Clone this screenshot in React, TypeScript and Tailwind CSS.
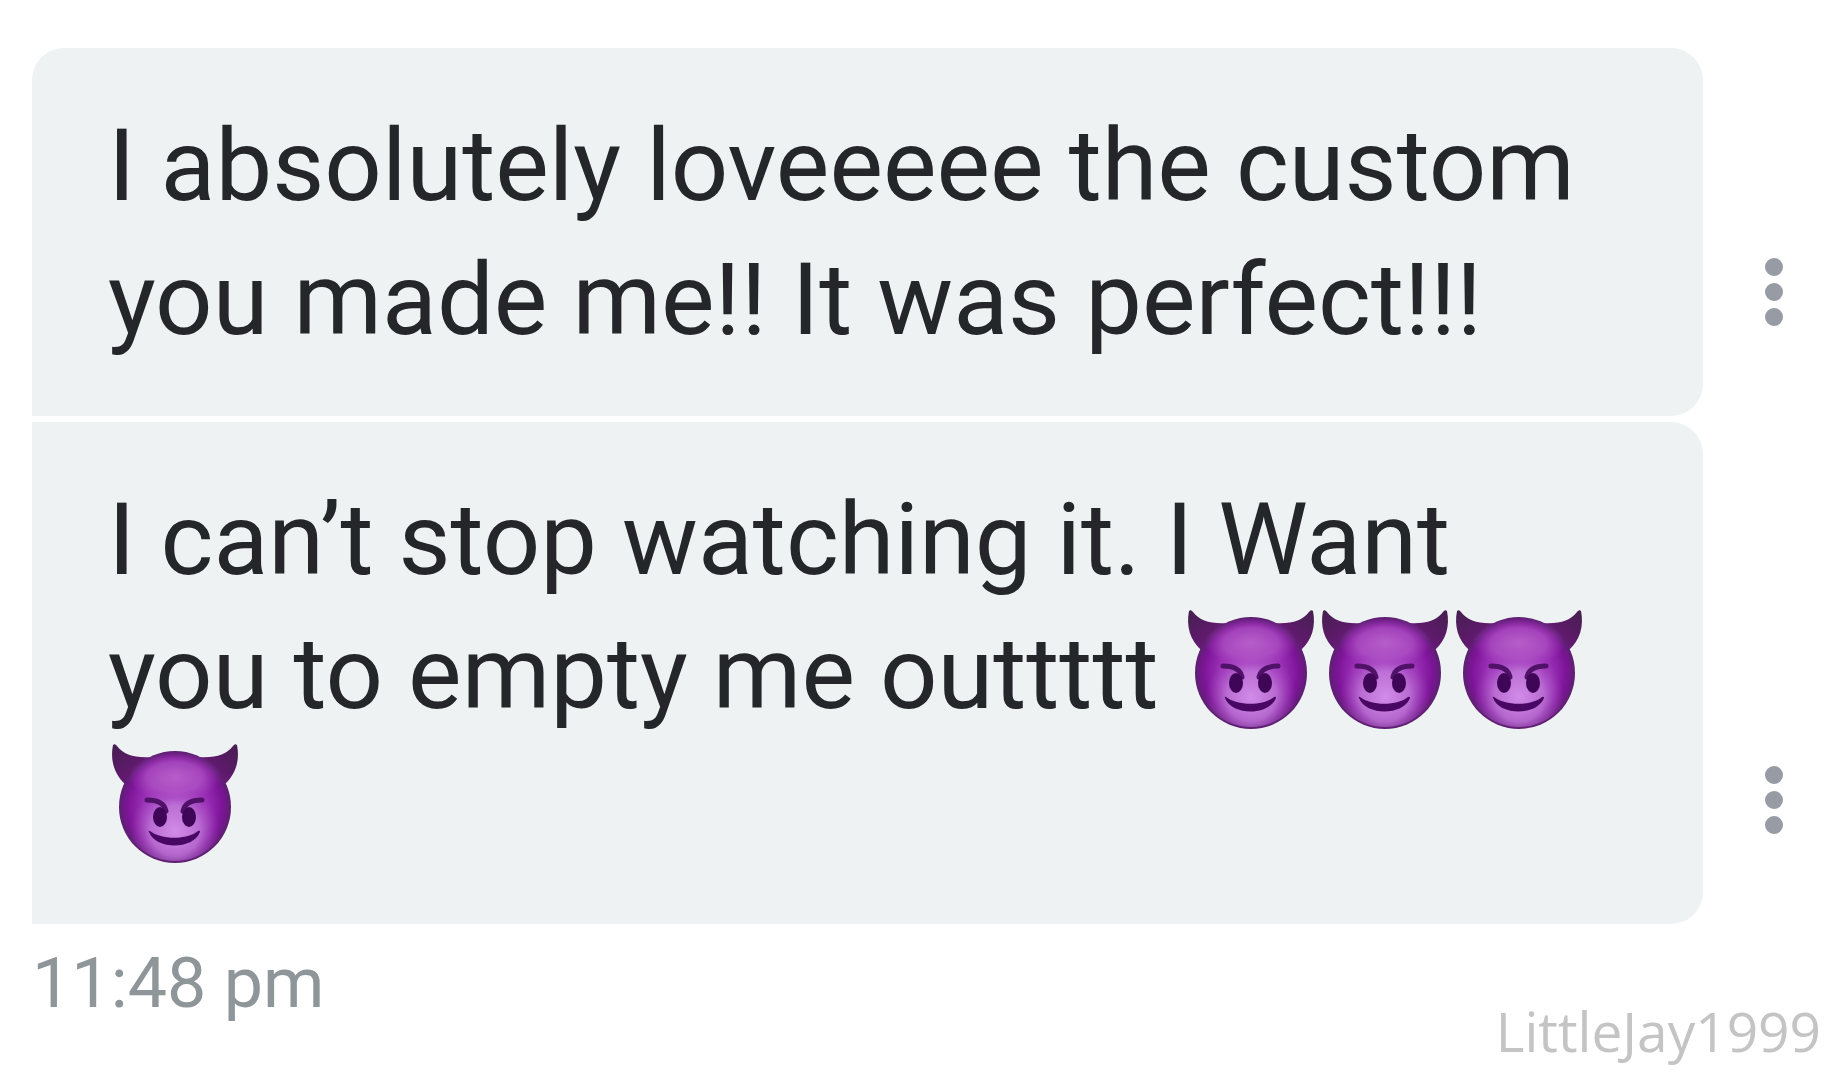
import type { ReactNode } from "react";

function Devil({ id }: { id: string }) {
  const face = `face-${id}`;
  const glow = `glow-${id}`;
  const shine = `shine-${id}`;
  const hornL = `horn-l-${id}`;
  const hornR = `horn-r-${id}`;
  return (
    <svg
      role="img"
      aria-label="smiling face with horns"
      viewBox="0 0 134 134"
      className="inline-block h-[134px] w-[134px] align-top"
    >
      <defs>
        <radialGradient id={face} cx="0.5" cy="0.5" r="0.5">
          <stop offset="0" stopColor="#a844c4" />
          <stop offset="0.55" stopColor="#9a30b6" />
          <stop offset="0.85" stopColor="#7d1498" />
          <stop offset="1" stopColor="#5c2070" />
        </radialGradient>
        <radialGradient id={glow} cx="0.5" cy="0.72" r="0.42">
          <stop offset="0" stopColor="#d28ce8" />
          <stop offset="0.55" stopColor="#c47fdc" stopOpacity="0.75" />
          <stop offset="1" stopColor="#a850c4" stopOpacity="0" />
        </radialGradient>
        <radialGradient id={shine} cx="0.5" cy="0.5" r="0.5">
          <stop offset="0" stopColor="#b862cb" stopOpacity="0.9" />
          <stop offset="0.6" stopColor="#b055c6" stopOpacity="0.7" />
          <stop offset="1" stopColor="#a540bd" stopOpacity="0" />
        </radialGradient>
        <linearGradient id={hornL} x1="0" y1="0" x2="1" y2="1">
          <stop offset="0" stopColor="#45204f" />
          <stop offset="0.5" stopColor="#5d1a6a" />
          <stop offset="1" stopColor="#7a1c8c" />
        </linearGradient>
        <linearGradient id={hornR} x1="1" y1="0" x2="0" y2="1">
          <stop offset="0" stopColor="#45204f" />
          <stop offset="0.5" stopColor="#5d1a6a" />
          <stop offset="1" stopColor="#7a1c8c" />
        </linearGradient>
      </defs>
      <path d="M5 4 Q7 2 9 5 C16 14 26 17 44 16 L17 43 C6 33 2 19 5 4Z" fill={`url(#${hornL})`} />
      <path d="M129 4 Q127 2 125 5 C118 14 108 17 90 16 L117 43 C128 33 132 19 129 4Z" fill={`url(#${hornR})`} />
      <circle cx="67" cy="66" r="56" fill={`url(#${face})`} />
      <circle cx="67" cy="66" r="54" fill={`url(#${glow})`} />
      <ellipse cx="67" cy="36" rx="46" ry="25" fill={`url(#${shine})`} />
      <path d="M39 59 C47 59 56 61 58 70" fill="none" stroke="#4f1268" strokeWidth="5" strokeLinecap="round" />
      <path d="M94 59 C86 59 77 61 75 70" fill="none" stroke="#4f1268" strokeWidth="5" strokeLinecap="round" />
      <ellipse cx="52" cy="76" rx="7" ry="10" fill="#3f0658" />
      <ellipse cx="81" cy="76" rx="7" ry="10" fill="#3f0658" />
      <path
        d="M42 90 C53 99 80 99 90 90 Q92 89 92 91 C85 109 48 109 41 91 Q40 89 42 90Z"
        fill="#480763"
      />
    </svg>
  );
}

function Message({ children, corners }: { children: ReactNode; corners: string }) {
  return (
    <div className="flex items-end gap-2">
      <div className={`min-w-0 flex-1 bg-[#eef2f3] pt-[51px] pr-[80px] pb-[49px] pl-[76px] ${corners}`}>
        <p className="text-[101px] leading-[134px] text-[#242629]">{children}</p>
      </div>
      <button
        type="button"
        aria-label="Message options"
        className="mb-[89px] flex w-[126px] justify-center text-[#979ba3]"
      >
        <svg viewBox="0 0 20 70" className="h-[70px] w-5" fill="currentColor" aria-hidden="true">
          <circle cx="10" cy="10" r="9" />
          <circle cx="10" cy="35" r="9" />
          <circle cx="10" cy="60" r="9" />
        </svg>
      </button>
    </div>
  );
}

export default function App() {
  return (
    <main className="min-h-screen bg-white pt-12 pl-8 font-['Roboto',sans-serif]">
      <div className="flex flex-col gap-[6px]">
        <Message corners="rounded-t-[32px] rounded-br-[32px]">
          I absolutely loveeeee the custom you made me!! It was perfect!!!
        </Message>
        <Message corners="rounded-r-[32px]">
          I can’t stop watching it. I Want you to empty me outtttt <Devil id="a" />
          <Devil id="b" />
          <Devil id="c" />
          <Devil id="d" />
        </Message>
      </div>
      <div className="flex items-start justify-between pr-4">
        <time className="pt-[18px] text-[70px] leading-[82px] text-[#8f969a]">11:48 pm</time>
        <span className="pt-[71px] font-['Open_Sans',sans-serif] text-[55px] leading-[72px] text-[#c4c4c4]">
          LittleJay1999
        </span>
      </div>
    </main>
  );
}
